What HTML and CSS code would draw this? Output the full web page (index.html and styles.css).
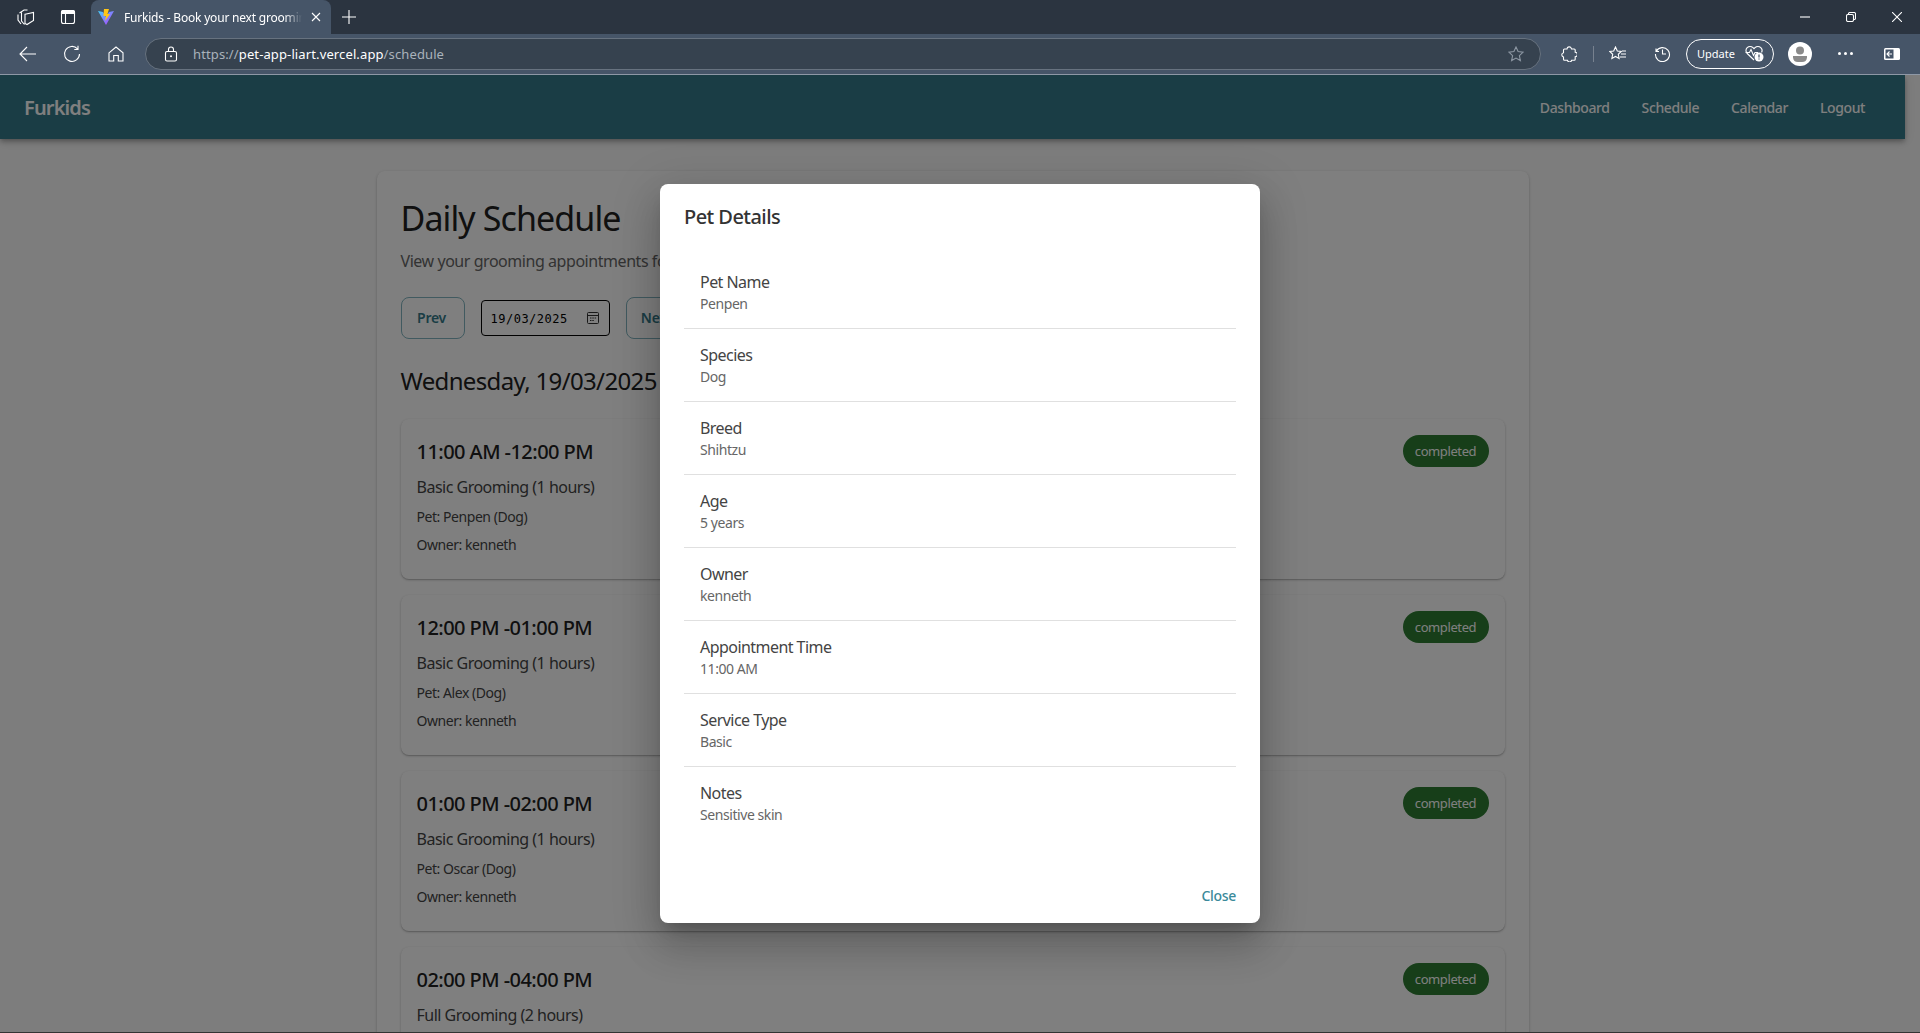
FILE: index.html
```html
<!DOCTYPE html>
<html lang="en">
<head>
    <meta charset="UTF-8">
    <meta name="viewport" content="width=device-width, initial-scale=1.0">
    <title>Furkids - Book your next grooming</title>
    <link rel="stylesheet" href="styles.css">
</head>
<body>

    <!-- Browser chrome -->
    <div class="tabstrip">
        <span class="strip-icon first">
            <svg width="18" height="18" viewBox="0 0 18 18"><path d="M8 6.200 16.500 4.500V12.500L10 16.500 8 15.500zM2.500 5 7 2h3.500M1 6.500V12l3 4M4.500 4.500V13l3 3.500" class="ic"/></svg>
        </span>
        <span class="strip-icon">
            <svg width="16" height="16" viewBox="0 0 16 16"><rect x="1.500" y="1.500" width="13" height="13" rx="2" class="ic"/><path d="M1.500 4.500h13V3a1.500 1.500 0 0 0-1.500-1.500H3A1.500 1.500 0 0 0 1.500 3zM5.500 4.500v10" class="ic fill"/></svg>
        </span>
        <div class="tab">
            <svg width="18" height="18" viewBox="0 0 18 18">
                <defs>
                    <linearGradient id="vite" x1="0" y1="0" x2="1" y2="1"><stop offset="0" stop-color="#41d1ff"/><stop offset="1" stop-color="#bd34fe"/></linearGradient>
                </defs>
                <path d="M1 3 9 17 17 3 12 4 9 9 6 4z" fill="url(#vite)"/>
                <path d="M7 1h5l-1.500 5H13l-5 7 1-5H6.500z" fill="#ffc517"/>
            </svg>
            <span class="tab-title">Furkids - Book your next groomin</span>
            <svg width="10" height="10" viewBox="0 0 10 10"><path d="M1 1l8 8M9 1l-8 8" class="ic"/></svg>
        </div>
        <span class="new-tab">
            <svg width="14" height="14" viewBox="0 0 14 14"><path d="M7 0v14M0 7h14" class="ic"/></svg>
        </span>
        <div class="window-btns">
            <svg width="10" height="10" viewBox="0 0 10 10"><path d="M0 5h10" class="ic"/></svg>
            <svg width="10" height="10" viewBox="0 0 10 10"><rect x="0.500" y="2.500" width="7" height="7" rx="1.500" class="ic"/><path d="M2.500 2.500V1.800A1.300 1.300 0 0 1 3.800.5h4.400a1.300 1.300 0 0 1 1.300 1.300v4.400a1.300 1.300 0 0 1-1.300 1.300h-.7" class="ic"/></svg>
            <svg width="10" height="10" viewBox="0 0 10 10"><path d="M0 0l10 10M10 0 0 10" class="ic"/></svg>
        </div>
    </div>

    <div class="toolbar">
        <span class="tool-btn">
            <svg width="18" height="16" viewBox="0 0 18 16"><path d="M1 8h16M8 1 1 8l7 7" class="ic"/></svg>
        </span>
        <span class="tool-btn">
            <svg width="18" height="18" viewBox="0 0 18 18"><path d="M14.500 3.800A7.500 7.500 0 1 0 16.500 9M15 .8v3.700h-3.700" class="ic"/></svg>
        </span>
        <span class="tool-btn">
            <svg width="16" height="16" viewBox="0 0 16 16"><path d="M1 6.800 8 1l7 5.800V15h-4.700V9.500H5.700V15H1z" class="ic"/></svg>
        </span>
        <div class="addressbar">
            <svg width="14" height="16" viewBox="0 0 14 16"><rect x="1.500" y="5.500" width="11" height="9.500" rx="1.500" class="ic"/><path d="M4.500 5.500V3.500a2.500 2.500 0 0 1 5 0v2" class="ic"/><circle cx="7" cy="10.200" r="1" fill="#fff"/></svg>
            <span class="url"><span class="url-dim">https://</span>pet-app-liart.vercel.app<span class="url-dim">/schedule</span></span>
            <svg class="url-star" width="16" height="16" viewBox="0 0 16 16"><path d="m8 1 2.100 4.600 5 .6-3.700 3.400 1 5L8 12.100 3.600 14.600l1-5L.9 6.200l5-.6z" class="ic dim"/></svg>
        </div>
        <span class="tool-btn ext">
            <svg width="16" height="16" viewBox="0 0 16 16"><path d="M6 3a2.200 2.200 0 0 1 4.300-.6L10.500 3h2.700a1 1 0 0 1 1 1v2.300a2.200 2.200 0 0 1 0 4.400v2.500a1 1 0 0 1-1 1h-2.500a2.200 2.200 0 0 1-4.300 0H3.500a1 1 0 0 1-1-1v-2.200a2.200 2.200 0 0 1 0-4.300V4a1 1 0 0 1 1-1z" class="ic"/></svg>
        </span>
        <span class="tool-sep"></span>
        <span class="tool-btn">
            <svg width="18" height="16" viewBox="0 0 18 16"><path d="M6.500 1 8.300 5l4 .5-3 2.800.8 4.200-3.600-2-3.600 2 .8-4.200-3-2.800 4-.5zM12 8h5M11 11h6M13 5h4" class="ic"/></svg>
        </span>
        <span class="tool-btn">
            <svg width="17" height="17" viewBox="0 0 17 17"><path d="M2 3.500V6.500h3M2.300 6.300A7 7 0 1 1 1.500 9M8.500 4.500V9h3.500" class="ic"/></svg>
        </span>
        <div class="update-pill">
            <span>Update</span>
            <span class="heart">
                <svg width="19" height="17" viewBox="0 0 19 17"><path d="M9 15 2.200 8.500a4 4 0 0 1 0-5.800 4.200 4.200 0 0 1 5.800 0l1 1 1-1a4.200 4.200 0 0 1 5.800 0 4 4 0 0 1 .8 4.800M.5 7.500h4l1.500-3 2.500 6 1.500-3h3" class="ic"/><circle cx="14" cy="12" r="4.500" fill="#fff"/><path d="M14 9.500v3M14 13.600v1" stroke="#465568" stroke-width="1.300" fill="none"/></svg>
            </span>
        </div>
        <span class="avatar">
            <svg width="24" height="24" viewBox="0 0 24 24"><circle cx="12" cy="12" r="12" fill="#fff"/><circle cx="12" cy="8.500" r="4" fill="#8a8a8a"/><path d="M5 14h14v1.500a5 5 0 0 1-5 4.500h-4a5 5 0 0 1-5-4.500z" fill="#8a8a8a"/></svg>
        </span>
        <span class="dots"><i></i><i></i><i></i></span>
        <span class="sidebar-btn">
            <svg width="16" height="12" viewBox="0 0 16 12"><rect width="16" height="12" rx="1.500" fill="#fff"/><path d="M1.500 1.500h8v9h-8z" fill="#465568"/><path d="M3 6h5M5.500 3.500 3 6l2.500 2.500" class="ic"/></svg>
        </span>
    </div>

    <!-- Page -->
    <div class="viewport">
        <div class="page">
            <nav class="navbar">
                <span class="brand">Furkids</span>
                <div class="nav-links">
                    <a>Dashboard</a>
                    <a>Schedule</a>
                    <a>Calendar</a>
                    <a>Logout</a>
                </div>
            </nav>

            <main class="container">
                <h1>Daily Schedule</h1>
                <p class="subtitle">View your grooming appointments for</p>
                <div class="date-row">
                    <button class="outline-btn">Prev</button>
                    <div class="date-input">
                        <span>19/03/2025</span>
                        <svg width="12" height="12" viewBox="0 0 12 12"><rect x="0.500" y="0.500" width="11" height="11" rx="1" fill="none" stroke="#333"/><path d="M.5 3.500h11" stroke="#333"/><path d="M3 6h1.500M5.300 6h1.500M7.600 6h1.500M3 8.500h1.500M5.300 8.500h1.500" stroke="#333"/></svg>
                    </div>
                    <button class="outline-btn">Next</button>
                </div>
                <h2>Wednesday, 19/03/2025</h2>

                <div class="appt">
                    <div>
                        <h3>11:00 AM -12:00 PM</h3>
                        <p class="service">Basic Grooming (1 hours)</p>
                        <p class="meta">Pet: Penpen (Dog)</p>
                        <p class="meta">Owner: kenneth</p>
                    </div>
                    <span class="chip">completed</span>
                </div>
                <div class="appt">
                    <div>
                        <h3>12:00 PM -01:00 PM</h3>
                        <p class="service">Basic Grooming (1 hours)</p>
                        <p class="meta">Pet: Alex (Dog)</p>
                        <p class="meta">Owner: kenneth</p>
                    </div>
                    <span class="chip">completed</span>
                </div>
                <div class="appt">
                    <div>
                        <h3>01:00 PM -02:00 PM</h3>
                        <p class="service">Basic Grooming (1 hours)</p>
                        <p class="meta">Pet: Oscar (Dog)</p>
                        <p class="meta">Owner: kenneth</p>
                    </div>
                    <span class="chip">completed</span>
                </div>
                <div class="appt">
                    <div>
                        <h3>02:00 PM -04:00 PM</h3>
                        <p class="service">Full Grooming (2 hours)</p>
                    </div>
                    <span class="chip">completed</span>
                </div>
            </main>
        </div>

        <!-- Pet details dialog -->
        <div class="backdrop">
            <div class="dialog">
                <h2 class="dialog-title">Pet Details</h2>
                <ul class="detail-list">
                    <li><span>Pet Name</span><small>Penpen</small></li>
                    <li><span>Species</span><small>Dog</small></li>
                    <li><span>Breed</span><small>Shihtzu</small></li>
                    <li><span>Age</span><small>5 years</small></li>
                    <li><span>Owner</span><small>kenneth</small></li>
                    <li><span>Appointment Time</span><small>11:00 AM</small></li>
                    <li><span>Service Type</span><small>Basic</small></li>
                    <li><span>Notes</span><small>Sensitive skin</small></li>
                </ul>
                <div class="dialog-actions">
                    <button class="close-btn">Close</button>
                </div>
            </div>
        </div>
    </div>

</body>
</html>
```

FILE: styles.css
```css
* {
    box-sizing: border-box;
}
html, body {
    height: 100%;
}
body {
    margin: 0;
    display: flex;
    flex-direction: column;
    overflow: hidden;
    font-family: "Noto Sans", Arial, sans-serif;
    color: #212121;
}

/* browser chrome */
.ic {
    fill: none;
    stroke: #fff;
    stroke-width: 1.1;
}
.ic.fill {
    fill: #fff;
}
.ic.dim {
    stroke: #8d97a3;
}
.tabstrip {
    height: 34px;
    flex: none;
    display: flex;
    align-items: center;
    background: #2b3440;
    color: #fff;
}
.strip-icon {
    width: 18px;
    height: 18px;
    display: flex;
    justify-content: center;
    align-items: center;
    margin-left: 24px;
}
.strip-icon.first {
    margin-left: 17px;
}
.tab {
    width: 240px;
    height: 34px;
    margin-left: 14px;
    padding: 0 10px 0 6px;
    display: flex;
    align-items: center;
    gap: 9px;
    background: #465568;
    border-radius: 8px 8px 0 0;
    font-size: 12px;
    letter-spacing: -0.2px;
}
.tab-title {
    flex: 1;
    min-width: 0;
    white-space: nowrap;
    -webkit-mask-image: linear-gradient(to right, #000 90%, transparent);
    mask-image: linear-gradient(to right, #000 90%, transparent);
}
.new-tab {
    display: flex;
    margin-left: 11px;
}
.window-btns {
    margin-left: auto;
    display: flex;
    gap: 36px;
    padding-right: 18px;
}
.toolbar {
    height: 41px;
    flex: none;
    display: flex;
    align-items: center;
    padding: 0 0 1px 0;
    background: #465568;
    border-bottom: 1px solid #8e98a6;
}
.tool-btn {
    width: 44px;
    height: 30px;
    display: flex;
    justify-content: center;
    align-items: center;
}
.tool-btn:first-child {
    margin-left: 6px;
}
.addressbar {
    width: 1396px;
    height: 32px;
    margin-left: 7px;
    padding: 0 16px 0 18px;
    display: flex;
    align-items: center;
    gap: 15px;
    background: #36424f;
    border: 1px solid #67727f;
    border-radius: 16px;
    font-size: 13px;
    letter-spacing: 0.12px;
    color: #fff;
}
.url-dim {
    color: #aab2bb;
}
.url-star {
    margin-left: auto;
}
.ext {
    margin-left: 6px;
}
.tool-sep {
    width: 1px;
    height: 16px;
    margin-left: 2px;
    background: #77818f;
}
.tool-sep + .tool-btn {
    margin-left: 2px;
}
.update-pill {
    width: 88px;
    height: 30px;
    margin-left: 2px;
    padding: 0 9px 0 10px;
    display: flex;
    align-items: center;
    justify-content: space-between;
    border: 1px solid #fff;
    border-radius: 15px;
    font-size: 11px;
    color: #fff;
}
.heart {
    display: flex;
}
.avatar {
    display: flex;
    margin-left: 14px;
}
.dots {
    display: flex;
    gap: 3px;
    margin-left: 26px;
}
.dots i {
    width: 3px;
    height: 3px;
    border-radius: 50%;
    background: #fff;
}
.sidebar-btn {
    display: flex;
    margin-left: 31px;
}

/* page */
.viewport {
    flex: 1;
    min-height: 0;
    position: relative;
    overflow: hidden;
    border-bottom: 1px solid #333;
}
.page {
    height: 100%;
    padding-right: 15px;
    background: #fafafa;
}
.navbar {
    height: 64px;
    padding: 0 40px 0 24px;
    display: flex;
    align-items: center;
    justify-content: space-between;
    background: #347a8a;
    color: #fff;
    box-shadow: 0 2px 4px -1px rgba(0,0,0,.2), 0 4px 5px rgba(0,0,0,.14), 0 1px 10px rgba(0,0,0,.12);
}
.brand {
    font-size: 20px;
    font-weight: 600;
    letter-spacing: -0.85px;
}
.nav-links {
    display: flex;
    gap: 32px;
    font-size: 14px;
    font-weight: 500;
    letter-spacing: -0.4px;
}
.container {
    width: 1152px;
    margin: 32px auto 0;
    padding: 24px;
    background: #fff;
    border-radius: 8px;
    box-shadow: 0 1px 3px rgba(0,0,0,.2), 0 1px 1px rgba(0,0,0,.14);
}
h1 {
    margin: 0;
    font-size: 34px;
    font-weight: 400;
    line-height: 46px;
    letter-spacing: -0.9px;
}
.subtitle {
    margin: 8px 0 0;
    font-size: 16px;
    line-height: 24px;
    letter-spacing: -0.45px;
    color: #666;
}
.date-row {
    margin-top: 24px;
    display: flex;
    align-items: center;
    gap: 16px;
}
.outline-btn {
    width: 64px;
    height: 42px;
    padding: 0 2px 2px 0;
    background: none;
    border: 1px solid #82b5c0;
    border-radius: 8px;
    font-family: inherit;
    font-size: 14px;
    font-weight: 600;
    letter-spacing: -0.3px;
    color: #347a8a;
}
.date-input {
    width: 129px;
    height: 36px;
    padding: 2px 10px 0 9px;
    display: flex;
    align-items: center;
    justify-content: space-between;
    border: 1px solid #000;
    border-radius: 4px;
    font-family: "DejaVu Sans Mono", monospace;
    font-size: 12px;
    letter-spacing: 0.5px;
    color: #000;
}
.date-input svg {
    margin-top: -2px;
}
.container h2 {
    margin: 24px 0 20px;
    font-size: 24px;
    font-weight: 400;
    line-height: 36px;
    letter-spacing: -0.65px;
}
.appt {
    height: 160px;
    margin-bottom: 16px;
    padding: 16px;
    display: flex;
    justify-content: space-between;
    align-items: flex-start;
    background: #fff;
    border-radius: 8px;
    box-shadow: 0 1px 3px rgba(0,0,0,.2), 0 1px 1px rgba(0,0,0,.14);
}
h3 {
    margin: 0;
    font-size: 20px;
    font-weight: 500;
    line-height: 34px;
    letter-spacing: -0.55px;
}
.service {
    margin: 6px 0 0;
    font-size: 16px;
    line-height: 24px;
    letter-spacing: -0.5px;
    color: #444;
}
.meta {
    margin: 6px 0 0;
    font-size: 14px;
    line-height: 22px;
    letter-spacing: -0.45px;
    color: #444;
}
.service + .meta {
    margin-top: 7px;
}
.chip {
    height: 32px;
    width: 86px;
    display: flex;
    align-items: center;
    justify-content: center;
    background: #2e7d32;
    border-radius: 16px;
    font-size: 13px;
    letter-spacing: -0.4px;
    color: #fff;
}

/* dialog */
.backdrop {
    position: absolute;
    inset: 0;
    display: flex;
    justify-content: center;
    align-items: center;
    background: rgba(0, 0, 0, 0.5);
}
.dialog {
    width: 600px;
    background: #fff;
    border-radius: 8px;
    box-shadow: 0 11px 15px -7px rgba(0,0,0,.2), 0 24px 38px 3px rgba(0,0,0,.14), 0 9px 46px 8px rgba(0,0,0,.12);
}
.dialog-title {
    margin: 0;
    padding: 17px 24px 15px;
    font-size: 20px;
    font-weight: 500;
    line-height: 32px;
    letter-spacing: -0.55px;
    color: #333;
}
.detail-list {
    margin: 0;
    padding: 8px 24px 29px;
    list-style: none;
}
.detail-list li {
    height: 73px;
    padding: 14px 16px 0;
    border-bottom: 1px solid #e0e0e0;
}
.detail-list li:last-child {
    border-bottom: none;
}
.detail-list span {
    display: block;
    font-size: 16px;
    line-height: 24px;
    letter-spacing: -0.55px;
    color: #444;
}
.detail-list small {
    display: block;
    font-size: 14px;
    line-height: 20px;
    letter-spacing: -0.43px;
    color: #666;
}
.dialog-actions {
    padding: 8px 24px 9px;
    display: flex;
    justify-content: flex-end;
}
.close-btn {
    height: 37px;
    padding: 0;
    background: none;
    border: none;
    font-family: inherit;
    font-size: 14px;
    font-weight: 500;
    letter-spacing: -0.3px;
    color: #3a8a9a;
}
```
